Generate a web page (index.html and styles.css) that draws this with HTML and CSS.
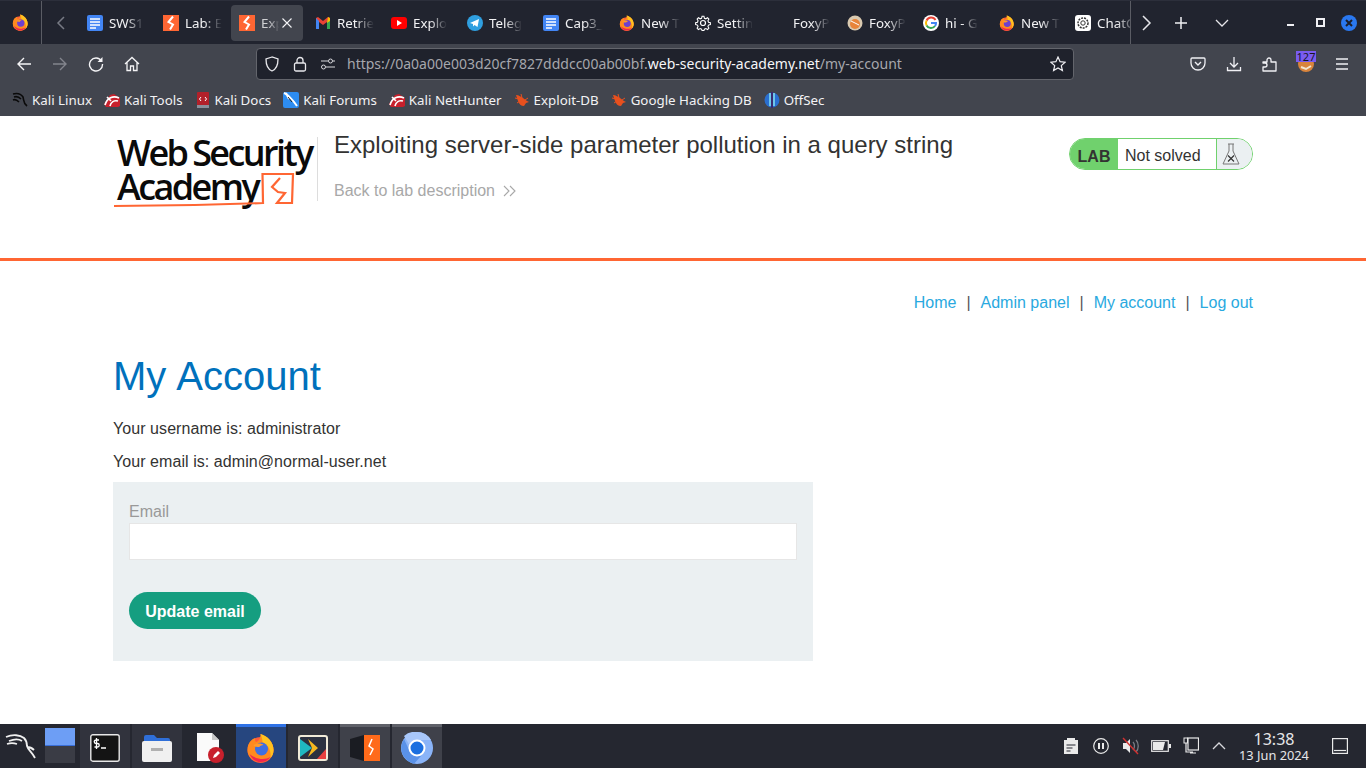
FILE: index.html
```html
<!DOCTYPE html>
<html>

<head>
    <meta charset="utf-8">
    <title>Exploiting server-side parameter pollution in a query string</title>
    <link rel="stylesheet" href="styles.css">
</head>

<body>

    <!-- shared icons -->
    <svg class="defs" width="0" height="0">
        <symbol id="fx" viewBox="2 1 29 30">
            <circle cx="16" cy="18" r="13" fill="#ff5a3c"/>
            <path d="M3 18C3 11 7 7 11 6c-1 2 0 4 1 4 2-1 4-3 4-8 7 2 13 8 13 16 0 7-6 12-13 12S3 25 3 18z" fill="#ff8a1f"/>
            <path d="M16 2c7 2 13 8 13 16 0 3-1 6-3 8 1-7-2-13-8-16 0-3-1-5-2-8z" fill="#ffc21f"/>
            <path d="M5 22c2 5 6 8 11 8 4 0 8-2 10-5-5 3-14 3-21-3z" fill="#f2264e"/>
            <circle cx="17" cy="17" r="6.500" fill="currentColor"/>
            <path d="M9 13c3-2 8-2 10 0-2 0-4 1-4 2-3 0-5 0-6-2z" fill="#ff9a2a"/>
        </symbol>
        <symbol id="doc" viewBox="0 0 16 16">
            <rect width="16" height="16" rx="2" fill="#4285f4"/>
            <path d="M3 4h10M3 7h10M3 10h10M3 13h6" stroke="#fff" stroke-width="1.600"/>
        </symbol>
        <symbol id="burp" viewBox="0 0 16 16">
            <rect width="16" height="16" fill="#ff6633"/>
            <path d="M10 1.500 5.500 7l4.500 2.500L7 14.500" fill="none" stroke="#fff" stroke-width="2"/>
        </symbol>
        <symbol id="kalired" viewBox="0 0 16 16">
            <path d="M0 12 6 3l4-1 6 4v8l-2 1H2z" fill="#c8202c"/>
            <path d="M1 13C3 6 9 3 15 6M6 14c1-4 4-6 8-5M3 5l4 4" fill="none" stroke="#fff" stroke-width="1.700"/>
        </symbol>
        <symbol id="bug" viewBox="0 0 16 16">
            <path d="M2 3c3 0 5 2 7 3l4 3 2 1-3 1-2 3c-3 0-5-2-6-5z" fill="#e8501e"/>
            <path d="M1 6l4 1M3 11l3-2M7 2l1 4M14 6l-3 2" stroke="#e8501e" stroke-width="1"/>
        </symbol>
    </svg>

    <div class="tabbar">
        <div class="fx-slot"><svg class="fx-purple" width="17" height="17"><use href="#fx"/></svg></div>
        <div class="tab-scroll">
            <svg width="16" height="16" viewBox="0 0 16 16"><path d="M11 2 5 8l6 6" fill="none" stroke="#777a84" stroke-width="1.500"/></svg>
        </div>
        <div class="tabs">
            <div class="tab"><svg width="16" height="16"><use href="#doc"/></svg><span class="tab-label">SWS1</span></div>
            <div class="tab"><svg width="16" height="16"><use href="#burp"/></svg><span class="tab-label">Lab: E</span></div>
            <div class="tab active">
                <svg width="16" height="16"><use href="#burp"/></svg>
                <span class="tab-label dim">Exp</span>
                <svg class="tab-close" width="10" height="10" viewBox="0 0 10 10"><path d="M.5.500l9 9M9.500.500l-9 9" stroke="#f4f4f6" stroke-width="1.100"/></svg>
            </div>
            <div class="tab">
                <svg width="16" height="16" viewBox="0 0 16 16"><path d="M1 3v11h3V7l4 3 4-3v7h3V3l-2-1-5 4-5-4z" fill="#ea4335"/><path d="M1 3v11h3V6z" fill="#4285f4"/><path d="M12 6v8h3V3z" fill="#34a853"/><path d="M13 2l2 1v3l-3 2z" fill="#fbbc04"/></svg>
                <span class="tab-label">Retrie</span>
            </div>
            <div class="tab">
                <svg width="16" height="16" viewBox="0 0 16 16"><rect y="2" width="16" height="12" rx="3" fill="#f00"/><path d="M6 5v6l5-3z" fill="#fff"/></svg>
                <span class="tab-label">Explo</span>
            </div>
            <div class="tab">
                <svg width="16" height="16" viewBox="0 0 16 16"><circle cx="8" cy="8" r="8" fill="#2f9fe0"/><path d="M3 8l9-4-1.500 8-3-2-1.500 1.500V9z" fill="#fff"/></svg>
                <span class="tab-label">Teleg</span>
            </div>
            <div class="tab"><svg width="16" height="16"><use href="#doc"/></svg><span class="tab-label">Cap3_</span></div>
            <div class="tab"><svg class="fx-purple" width="16" height="16"><use href="#fx"/></svg><span class="tab-label">New T</span></div>
            <div class="tab">
                <svg width="16" height="16" viewBox="0 0 16 16"><circle cx="8" cy="8" r="2.500" fill="none" stroke="#fff" stroke-width="1.200"/><path d="M7 1h2l.5 2 1.500.6L12.800 2.500l1.400 1.400-1 1.800.6 1.500 2 .5v2l-2 .5-.6 1.500 1 1.800-1.400 1.400-1.800-1-1.500.6-.5 1.500H7l-.5-1.500-1.500-.6-1.800 1-1.400-1.400 1-1.800-.6-1.500-2-.5v-2l2-.5.6-1.500-1-1.800 1.400-1.400L5 3.600 6.500 3z" fill="none" stroke="#fff" stroke-width="1.100" transform="translate(.4 .4) scale(.95)"/></svg>
                <span class="tab-label">Settin</span>
            </div>
            <div class="tab"><span class="no-ico"></span><span class="tab-label">FoxyP</span></div>
            <div class="tab">
                <svg width="16" height="16" viewBox="0 0 16 16"><circle cx="8" cy="8" r="7.500" fill="#d9c9b0"/><circle cx="8" cy="9" r="5" fill="#e8843a"/><path d="M4 6l8 4" stroke="#fff"/></svg>
                <span class="tab-label">FoxyP</span>
            </div>
            <div class="tab">
                <svg width="16" height="16" viewBox="0 0 16 16"><circle cx="8" cy="8" r="8" fill="#fff"/><path d="M12.500 5A5 5 0 0 0 3.600 5.500" fill="none" stroke="#ea4335" stroke-width="2"/><path d="M3.600 5.500a5 5 0 0 0 0 5" fill="none" stroke="#fbbc04" stroke-width="2"/><path d="M3.600 10.500a5 5 0 0 0 8.400 .5" fill="none" stroke="#34a853" stroke-width="2"/><path d="M12 11a5 5 0 0 0 1-3H8" fill="none" stroke="#4285f4" stroke-width="2"/></svg>
                <span class="tab-label">hi - G</span>
            </div>
            <div class="tab"><svg class="fx-purple" width="16" height="16"><use href="#fx"/></svg><span class="tab-label">New T</span></div>
            <div class="tab">
                <svg width="16" height="16" viewBox="0 0 16 16"><rect width="16" height="16" rx="3" fill="#fff"/><circle cx="8" cy="8" r="5" fill="none" stroke="#333" stroke-width="1.500" stroke-dasharray="2 1"/><circle cx="8" cy="8" r="2.200" fill="none" stroke="#333"/></svg>
                <span class="tab-label">ChatG</span>
            </div>
        </div>
        <div class="tab-tools">
            <svg width="16" height="16" viewBox="0 0 16 16"><path d="M5 1l7 7-7 7" fill="none" stroke="#e6e6ea" stroke-width="1.500"/></svg>
            <svg class="tool-plus" width="16" height="16" viewBox="0 0 16 16"><path d="M8 2v12M2 8h12" stroke="#f0f0f4" stroke-width="1.500"/></svg>
            <svg class="tool-list" width="16" height="16" viewBox="0 0 16 16"><path d="M2 5l6 6 6-6" fill="none" stroke="#e6e6ea" stroke-width="1.300"/></svg>
        </div>
        <div class="win-btns">
            <span class="win-min"></span>
            <span class="win-max"></span>
            <span class="win-close">
                <svg width="8" height="8" viewBox="0 0 8 8"><path d="M1 1l6 6M7 1 1 7" stroke="#1c1f2a" stroke-width="2"/></svg>
            </span>
        </div>
    </div>

    <div class="navbar">
        <div class="nav-btns">
            <svg width="16" height="16" viewBox="0 0 16 16"><path d="M15 8H2M8 2 2 8l6 6" fill="none" stroke="#f4f4f6" stroke-width="1.400"/></svg>
            <svg width="16" height="16" viewBox="0 0 16 16"><path d="M1 8h13M8 2l6 6-6 6" fill="none" stroke="#83858d" stroke-width="1.400"/></svg>
            <svg width="16" height="16" viewBox="0 0 16 16"><path d="M13.500 5A6.500 6.500 0 1 0 14.500 8" fill="none" stroke="#f4f4f6" stroke-width="1.400"/><path d="M14.500 1v5h-5z" fill="#f4f4f6"/></svg>
            <svg width="16" height="16" viewBox="0 0 16 16"><path d="M1 8l7-6.500L15 8M3 6.500V14.500h3.500V10h3v4.500H13V6.500" fill="none" stroke="#f4f4f6" stroke-width="1.300"/></svg>
        </div>
        <div class="urlbar">
            <svg width="16" height="16" viewBox="0 0 16 16"><path d="M8 1 2 3c0 6 1 10 6 12 5-2 6-6 6-12z" fill="none" stroke="#e8e8ec" stroke-width="1.300"/></svg>
            <svg width="16" height="16" viewBox="0 0 16 16"><rect x="2.500" y="7" width="11" height="8" rx="1.500" fill="none" stroke="#e8e8ec" stroke-width="1.300"/><path d="M5 7V4.500a3 3 0 0 1 6 0V7" fill="none" stroke="#e8e8ec" stroke-width="1.300"/></svg>
            <svg width="16" height="16" viewBox="0 0 16 16"><circle cx="10.500" cy="5" r="2" fill="none" stroke="#d8d8dc"/><circle cx="3.500" cy="11" r="2" fill="none" stroke="#d8d8dc"/><path d="M1 5h7M13 5h2M6 11h9" stroke="#d8d8dc" stroke-width="1.200"/></svg>
            <span class="url">https://0a0a00e003d20cf7827dddcc00ab00bf.<b>web-security-academy.net</b>/my-account</span>
            <svg width="16" height="16" viewBox="0 0 16 16"><path d="M8 1l2.100 4.700 5 .5-3.800 3.400 1.100 5L8 12l-4.400 2.600 1.100-5L.9 6.200l5-.5z" fill="none" stroke="#f0f0f4" stroke-width="1.200"/></svg>
        </div>
        <div class="nav-tools">
            <svg width="16" height="16" viewBox="0 0 16 16"><path d="M2 2h12a1 1 0 0 1 1 1v4a7 7 0 0 1-14 0V3a1 1 0 0 1 1-1z" fill="none" stroke="#f0f0f4" stroke-width="1.300"/><path d="M5 6l3 3 3-3" fill="none" stroke="#f0f0f4" stroke-width="1.400"/></svg>
            <svg width="16" height="16" viewBox="0 0 16 16"><path d="M8 1v10M4 7l4 4 4-4M1.500 11v3.500h13V11" fill="none" stroke="#f0f0f4" stroke-width="1.300"/></svg>
            <svg width="16" height="16" viewBox="0 0 16 16"><path d="M1 6h4V4a2 2 0 0 1 4 0v2h5v9H1v-4h2a2 2 0 0 0 0-4H1z" fill="none" stroke="#f0f0f4" stroke-width="1.300" stroke-linejoin="round"/></svg>
            <span class="foxy">
                <svg width="16" height="16" viewBox="0 0 16 16"><circle cx="8" cy="8" r="8" fill="#d8843c"/><path d="M3 11l5 2 5-3" stroke="#f2e6d0" stroke-width="2" fill="none"/></svg>
                <span class="foxy-badge">127</span>
            </span>
            <svg width="16" height="16" viewBox="0 0 16 16"><path d="M2 3h12M2 8h12M2 13h12" stroke="#f0f0f4" stroke-width="1.300"/></svg>
        </div>
    </div>

    <div class="bookmarks">
        <div class="bm">
            <svg width="16" height="16" viewBox="0 0 16 16"><path d="M1 2c4-1 8 0 10 3 1 3 0 6 4 9M2 5c3-1 5 0 7 2M1 8c2-1 4 0 6 2" fill="none" stroke="#0a0a0a" stroke-width="1.600"/></svg>
            Kali Linux
        </div>
        <div class="bm"><svg width="16" height="16"><use href="#kalired"/></svg>Kali Tools</div>
        <div class="bm">
            <svg width="16" height="16" viewBox="0 0 16 16"><rect x="2" y="0" width="12" height="16" rx="1" fill="#b3202a"/><rect x="2" y="13" width="12" height="3" fill="#8a8f9a"/><path d="M6 5 4.500 7 6 9M10 5l1.500 2L10 9" fill="none" stroke="#fff"/></svg>
            Kali Docs
        </div>
        <div class="bm">
            <svg width="16" height="16" viewBox="0 0 16 16"><rect width="16" height="16" rx="2" fill="#2d8cf0"/><path d="M1 1c3 1 9 7 13 13M3 1l3 6" fill="none" stroke="#fff" stroke-width="2"/><path d="M5 5l4 5" stroke="#222" stroke-width="1"/></svg>
            Kali Forums
        </div>
        <div class="bm"><svg width="16" height="16"><use href="#kalired"/></svg>Kali NetHunter</div>
        <div class="bm"><svg width="16" height="16"><use href="#bug"/></svg>Exploit-DB</div>
        <div class="bm"><svg width="16" height="16"><use href="#bug"/></svg>Google Hacking DB</div>
        <div class="bm">
            <svg width="16" height="16" viewBox="0 0 16 16"><circle cx="8" cy="8" r="7.500" fill="#2a6fd0"/><path d="M5 1h2v13H5zM9 1h2v13H9z" fill="#6ec6e8"/><path d="M7 0h2v16H7z" fill="#3a2a70"/></svg>
            OffSec
        </div>
    </div>

    <div class="page">
        <header class="lab-header">
            <div class="logo">
                <div>Web Security</div>
                <div>Academy</div>
                <svg class="logo-mark" width="200" height="72" viewBox="0 0 200 72">
                    <path d="M1 70C50 70 100 69 150 67L149.500 38H180L179 67H164L172 57 165 56 159 51 167 42" fill="none" stroke="#ff6633" stroke-width="2.200"/>
                </svg>
            </div>
            <div class="lab-title">
                <h2>Exploiting server-side parameter pollution in a query string</h2>
                <div class="back-link">
                    Back to lab description
                    <svg width="13" height="12" viewBox="0 0 13 12"><path d="M1 1l5 5-5 5M7 1l5 5-5 5" fill="none" stroke="#a8a8a8" stroke-width="1.100"/></svg>
                </div>
            </div>
            <div class="lab-status">
                <span class="lab-tag">LAB</span>
                <span class="lab-state">Not solved</span>
                <span class="lab-flask">
                    <svg width="18" height="24" viewBox="0 0 18 24"><path d="M6 2h6M7 2v7L1 22h16L11 9V2" fill="none" stroke="#777" stroke-width="1"/><path d="M6 13.500l6 6M12 13.500l-6 6" stroke="#333" stroke-width="1.200"/></svg>
                </span>
            </div>
        </header>

        <div class="content">
            <nav class="top-links">
                <a>Home</a><span class="sep">|</span><a>Admin panel</a><span class="sep">|</span><a>My account</a><span class="sep">|</span><a>Log out</a>
            </nav>
            <h1>My Account</h1>
            <p>Your username is: administrator</p>
            <p>Your email is: admin@normal-user.net</p>
            <form class="email-form">
                <label>Email</label>
                <input type="text">
                <button type="button">Update email</button>
            </form>
        </div>
    </div>

    <div class="taskbar">
        <div class="kali-start">
            <svg width="32" height="28" viewBox="0 0 32 28"><path d="M1 5c7-3 14-2 18 1 3 3 3 6 3 8 1 4 5 6 8 12M4 9c5-2 10-2 13 0M2 12c3-1 7-1 10 0M22 15c2 0 5 1 7 3" fill="none" stroke="#f0f0f0" stroke-width="1.800"/></svg>
        </div>
        <div class="pager">
            <div class="pager-on"></div>
            <div class="pager-off"></div>
        </div>
        <div class="task open">
            <svg width="30" height="28" viewBox="0 0 30 28"><rect x=".8" y=".8" width="28.400" height="26.400" rx="2" fill="#141414" stroke="#e8e8e8" stroke-width="1.400"/><path d="M9 6H6a1.500 1.500 0 0 0 0 3.500h1.500a1.500 1.500 0 0 1 0 3.500H4.500M6.500 4v11M11 14h5" fill="none" stroke="#fff" stroke-width="1.300"/></svg>
        </div>
        <div class="task open">
            <svg width="30" height="28" viewBox="0 0 30 28"><path d="M2 3a2 2 0 0 1 2-2h8l3 3h11a2 2 0 0 1 2 2v4H2z" fill="#2f6fd8"/><rect x="0" y="7" width="30" height="21" rx="2" fill="#f0f0f0"/><rect x="9" y="14" width="12" height="3" fill="#b0b0b0"/></svg>
        </div>
        <div class="task">
            <svg class="task-doc" width="30" height="30" viewBox="0 0 30 30"><path d="M0 0h15l7 7v21H0z" fill="#fafafa"/><path d="M15 0l7 7h-7z" fill="#c8c8c8"/><circle cx="19" cy="22" r="8" fill="#c8202c"/><path d="M16 25l1-3 4-4 2 2-4 4z" fill="#fff"/></svg>
        </div>
        <div class="task active">
            <svg class="fx-blue" width="30" height="30"><use href="#fx"/></svg>
        </div>
        <div class="task open">
            <svg width="30" height="26" viewBox="0 0 30 26"><rect x="1" y="1" width="28" height="24" rx="2" fill="#2c3140" stroke="#f0ead8" stroke-width="2"/><path d="M2 4l12 9-12 9z" fill="#1fb8c0"/><path d="M10 4l10 9-10 9 4-9z" fill="#f5b820"/><path d="M28 14v10H19z" fill="#e84040"/></svg>
        </div>
        <div class="task run">
            <svg width="30" height="28" viewBox="0 0 30 28"><path d="M0 5l14-4v26L0 23z" fill="#1a1c22"/><path d="M14 1h16v26H14z" fill="#ff6a1a"/><path d="M22 5l-3 7 4 3-3 6" fill="none" stroke="#fff" stroke-width="1.500"/></svg>
        </div>
        <div class="task run">
            <svg width="32" height="32" viewBox="0 0 32 32"><circle cx="16" cy="16" r="16" fill="#8ab4f8"/><path d="M16 0a16 16 0 0 1 14 8H16a8 8 0 0 0-7.500 5L3 4a16 16 0 0 1 13-4z" fill="#a8c7fa"/><path d="M3 7a16 16 0 0 0 10 24.700L20 24l-11-4z" fill="#5a92e8"/><circle cx="16" cy="16" r="7.500" fill="#1a6fe0" stroke="#fff" stroke-width="2"/></svg>
        </div>
        <div class="tray">
            <span class="tray-ico"><svg width="16" height="18" viewBox="0 0 16 18"><rect x="1" y="3" width="14" height="14" fill="#eaeaea"/><rect x="4" y="1" width="8" height="3" fill="#eaeaea"/><path d="M3.500 8h9M3.500 11h6M3.500 14h4" stroke="#252730" stroke-width="1.200"/></svg></span>
            <span class="tray-ico"><svg width="16" height="16" viewBox="0 0 16 16"><circle cx="8" cy="8" r="7.300" fill="none" stroke="#eaeaea" stroke-width="1.200"/><path d="M6 5v6M10 5v6" stroke="#eaeaea" stroke-width="2"/></svg></span>
            <span class="tray-ico"><svg width="18" height="18" viewBox="0 0 18 18"><path d="M1 6h3l4-4v14l-4-4H1z" fill="#eaeaea"/><path d="M11 5c2 2 2 6 0 8M14 3c3 3 3 9 0 12" fill="none" stroke="#7a7c84" stroke-width="1.300"/><path d="M1 1l15 16" stroke="#d03030" stroke-width="1.400"/></svg></span>
            <span class="tray-ico"><svg width="20" height="12" viewBox="0 0 20 12"><rect x=".7" y=".7" width="16.600" height="10.600" fill="none" stroke="#eaeaea" stroke-width="1.200"/><path d="M2 2h12l-2 8H2z" fill="#eaeaea"/><rect x="18" y="4" width="2" height="4" fill="#eaeaea"/></svg></span>
            <span class="tray-ico"><svg width="16" height="18" viewBox="0 0 16 18"><rect x="5" y="1" width="10.500" height="12" fill="none" stroke="#eaeaea" stroke-width="1.200"/><rect x="1" y="1" width="3.500" height="5" fill="#252730" stroke="#eaeaea"/><path d="M3 6v9h7M7 16h6" fill="none" stroke="#eaeaea" stroke-width="1.200"/></svg></span>
            <span class="tray-ico tray-up"><svg width="14" height="14" viewBox="0 0 14 14"><path d="M1 10l6-6 6 6" fill="none" stroke="#d8d8dc" stroke-width="1.300"/></svg></span>
        </div>
        <div class="clock">
            <div class="clock-time">13:38</div>
            <div class="clock-date">13 Jun 2024</div>
        </div>
        <div class="show-desktop">
            <svg width="16" height="16" viewBox="0 0 16 16"><rect x=".6" y=".6" width="14.800" height="14.800" fill="none" stroke="#eaeaea" stroke-width="1.200"/><path d="M2 12.500h12" stroke="#eaeaea" stroke-width="1.200"/></svg>
        </div>
    </div>

</body>

</html>
```

FILE: styles.css
```css
html, body {
    margin: 0;
    height: 100%;
}
body {
    display: flex;
    flex-direction: column;
    height: 768px;
    overflow: hidden;
    background-color: #ffffff;
    font-family: "Noto Sans", sans-serif;
}
.defs {
    display: block;
    height: 0;
}
svg {
    flex: none;
}
.fx-purple {
    color: #6c3fd1;
}
.fx-blue {
    color: #3f6fe0;
}

/* tab strip */
.tabbar {
    display: flex;
    align-items: center;
    flex: none;
    height: 44px;
    background-color: #21242f;
    border-top: 1px solid #2c2f3b;
    box-sizing: border-box;
}
.fx-slot {
    display: flex;
    align-items: center;
    justify-content: center;
    width: 42px;
    height: 43px;
    border-right: 1px solid #5a5c64;
    box-sizing: border-box;
}
.tab-scroll {
    display: flex;
    justify-content: center;
    width: 35px;
    margin-left: 1px;
    margin-right: -1px;
    padding-left: 1px;
    box-sizing: border-box;
}
.tabs {
    display: flex;
    width: 1054px;
    height: 43px;
    align-items: center;
    overflow: hidden;
    border-right: 1px solid #5a5c64;
    box-sizing: border-box;
}
.tab {
    display: flex;
    align-items: center;
    flex: none;
    gap: 6px;
    width: 72px;
    height: 36px;
    margin: 0 2px;
    padding-left: 8px;
    box-sizing: border-box;
    border-radius: 4px;
    color: #f2f2f4;
    font-size: 13.330px;
    white-space: nowrap;
}
.tab.active {
    background-color: #42454e;
}
.tab-label {
    -webkit-mask-image: linear-gradient(to right, #000 50%, transparent 100%);
    mask-image: linear-gradient(to right, #000 50%, transparent 100%);
}
.tab-label.dim {
    -webkit-mask-image: linear-gradient(to right, rgba(0,0,0,.8) 35%, transparent 80%);
    mask-image: linear-gradient(to right, rgba(0,0,0,.8) 35%, transparent 80%);
}
.tab-close {
    margin-left: -8px;
}
.no-ico {
    width: 16px;
}
.tab-tools {
    display: flex;
    align-items: center;
    width: 126px;
    padding-left: 7px;
    box-sizing: border-box;
}
.tool-plus {
    margin-left: 19px;
}
.tool-list {
    margin-left: 25px;
}
.win-btns {
    display: flex;
    align-items: center;
    flex: 1;
    justify-content: flex-end;
    gap: 14px;
    padding-right: 9px;
}
.win-min {
    width: 7px;
    height: 2px;
    background-color: #f0f0f4;
    margin-top: 4px;
    margin-right: 3px;
}
.win-max {
    width: 5px;
    height: 5px;
    border: 2px solid #f0f0f4;
    margin: 0 2px 0 5px;
}
.win-close {
    display: flex;
    align-items: center;
    justify-content: center;
    width: 16px;
    height: 16px;
    border-radius: 50%;
    background-color: #2a78f0;
}

/* toolbar */
.navbar {
    display: flex;
    align-items: center;
    flex: none;
    height: 40px;
    background-color: #42454e;
    box-sizing: border-box;
}
.nav-btns {
    display: flex;
    align-items: center;
    gap: 20px;
    width: 256px;
    padding-left: 16px;
    box-sizing: border-box;
}
.urlbar {
    display: flex;
    align-items: center;
    width: 818px;
    height: 32px;
    gap: 12px;
    padding: 0 7px;
    box-sizing: border-box;
    background-color: #1f222c;
    border: 1px solid #63656c;
    border-radius: 4px;
}
.url {
    flex: 1;
    margin-left: -1px;
    margin-top: -2px;
    color: #a6a7ac;
    font-size: 14px;
    white-space: nowrap;
}
.url b {
    color: #f6f6f8;
    font-weight: 400;
}
.nav-tools {
    display: flex;
    align-items: center;
    gap: 20px;
    padding-left: 116px;
}
.foxy {
    position: relative;
    display: flex;
}
.foxy-badge {
    position: absolute;
    left: -2px;
    top: -5px;
    width: 20px;
    height: 11px;
    background-color: #7a5cf0;
    color: #16161c;
    font-size: 11px;
    line-height: 11px;
    text-align: center;
}

/* bookmarks */
.bookmarks {
    display: flex;
    align-items: center;
    flex: none;
    height: 32px;
    gap: 12px;
    padding-left: 12px;
    background-color: #42454e;
    box-sizing: border-box;
    color: #f2f2f4;
    font-size: 13.330px;
}
.bm {
    display: flex;
    align-items: center;
    gap: 4px;
    white-space: nowrap;
}

/* web page */
.page {
    flex: 1;
    min-height: 0;
    background-color: #ffffff;
    font-family: "Liberation Sans", Arial, sans-serif;
    color: #333332;
}
.lab-header {
    display: flex;
    align-items: flex-start;
    height: 145px;
    padding: 20px 113px 0 113px;
    box-sizing: border-box;
    border-bottom: 3px solid #ff6633;
}
.logo {
    position: relative;
    flex: none;
    width: 203px;
    height: 72px;
    padding-left: 4px;
    box-sizing: border-box;
    color: #0a0a0a;
    font-family: "Open Sans", sans-serif;
    font-size: 36px;
    font-weight: 600;
    line-height: 34px;
    letter-spacing: -2.600px;
    word-spacing: -1px;
    white-space: nowrap;
}
.logo-mark {
    position: absolute;
    left: 0;
    top: 0;
}
.lab-title {
    flex: 1;
    height: 64px;
    margin-top: 1px;
    margin-left: 1px;
    padding-left: 16px;
    border-left: 1px solid #dddddd;
}
.lab-title h2 {
    margin: -1px 0 0 0;
    font-size: 24px;
    font-weight: 400;
    line-height: 18px;
    color: #333332;
}
.back-link {
    display: flex;
    align-items: center;
    gap: 8px;
    margin-top: 28px;
    color: #a8a8a8;
    font-size: 16px;
    line-height: 18px;
}
.lab-status {
    display: flex;
    align-items: stretch;
    flex: none;
    width: 184px;
    height: 32px;
    margin-top: 2px;
    box-sizing: border-box;
    border: 1px solid #70d16d;
    border-radius: 16px;
    overflow: hidden;
    font-size: 16px;
}
.lab-tag {
    display: flex;
    align-items: center;
    justify-content: center;
    width: 48px;
    background-color: #70d16d;
    font-weight: 700;
    padding-top: 5px;
    box-sizing: border-box;
}
.lab-state {
    display: flex;
    align-items: center;
    width: 98px;
    padding: 3px 0 0 7px;
    box-sizing: border-box;
}
.lab-flask {
    display: flex;
    align-items: center;
    flex: 1;
    padding-left: 5px;
    background-color: #ebf0f2;
    border-left: 1px solid #70d16d;
}
.content {
    padding: 33px 113px 0 113px;
}
.top-links {
    display: flex;
    justify-content: flex-end;
    font-size: 16px;
    line-height: 18px;
}
.top-links a {
    color: #29a9e0;
}
.sep {
    margin: 0 10px;
    color: #555555;
}
h1 {
    margin: 41px 0 0 0;
    color: #0071bc;
    font-size: 40px;
    font-weight: 400;
    line-height: 46px;
    word-spacing: 1px;
}
.content p {
    margin: 21px 0 0 0;
    font-size: 16px;
    line-height: 18px;
    letter-spacing: .065px;
}
.content p + p {
    margin-top: 15px;
}
.email-form {
    display: flex;
    flex-direction: column;
    align-items: flex-start;
    width: 700px;
    height: 179px;
    margin-top: 11px;
    padding: 21px 16px 0 16px;
    box-sizing: border-box;
    background-color: #ebf0f2;
}
.email-form label {
    color: #999999;
    font-size: 16px;
    line-height: 18px;
}
.email-form input {
    width: 668px;
    height: 37px;
    margin: 2px 0 32px 0;
    box-sizing: border-box;
    background-color: #ffffff;
    border: 1px solid #e6e6e6;
}
.email-form button {
    width: 132px;
    height: 37px;
    padding: 2px 0 0 0;
    border: 0;
    border-radius: 19px;
    background-color: #159e80;
    color: #ffffff;
    font-family: "Liberation Sans", Arial, sans-serif;
    font-size: 16px;
    font-weight: 700;
}

/* panel */
.taskbar {
    display: flex;
    align-items: stretch;
    flex: none;
    height: 44px;
    background-color: #252730;
}
.kali-start {
    display: flex;
    align-items: center;
    width: 45px;
    padding-left: 5px;
    box-sizing: border-box;
}
.pager {
    display: flex;
    flex-direction: column;
    width: 30px;
    margin: 4px 5px 5px 0;
}
.pager-on {
    height: 17px;
    background-color: #6d9ef5;
    border-bottom: 1px solid #3a6fd8;
}
.pager-off {
    flex: 1;
    background-color: #3a3c45;
}
.task {
    display: flex;
    align-items: center;
    justify-content: center;
    width: 50px;
    margin-right: 2px;
    border-top: 3px solid transparent;
    box-sizing: border-box;
}
.task.open {
    background-color: #31333d;
}
.task.run {
    background-color: #3f414a;
    border-top-color: #5f6169;
}
.task.active {
    background-color: #26467f;
    border-top-color: #2f72e6;
}
.task-doc {
    margin-left: 6px;
}
.tray {
    display: flex;
    align-items: center;
    flex: 1;
    justify-content: flex-end;
    gap: 12px;
    padding-right: 9px;
}
.tray-ico {
    display: flex;
    justify-content: center;
    width: 18px;
}
.tray-up {
    margin-left: -2px;
}
.clock {
    width: 76px;
    padding: 7px 2px 0 0;
    box-sizing: border-box;
    text-align: center;
    color: #e6e6e8;
    white-space: nowrap;
}
.clock-time {
    font-size: 16px;
    line-height: 17px;
}
.clock-date {
    font-size: 12.800px;
    line-height: 14px;
}
.show-desktop {
    display: flex;
    align-items: center;
    padding: 0 18px 0 19px;
}
```
